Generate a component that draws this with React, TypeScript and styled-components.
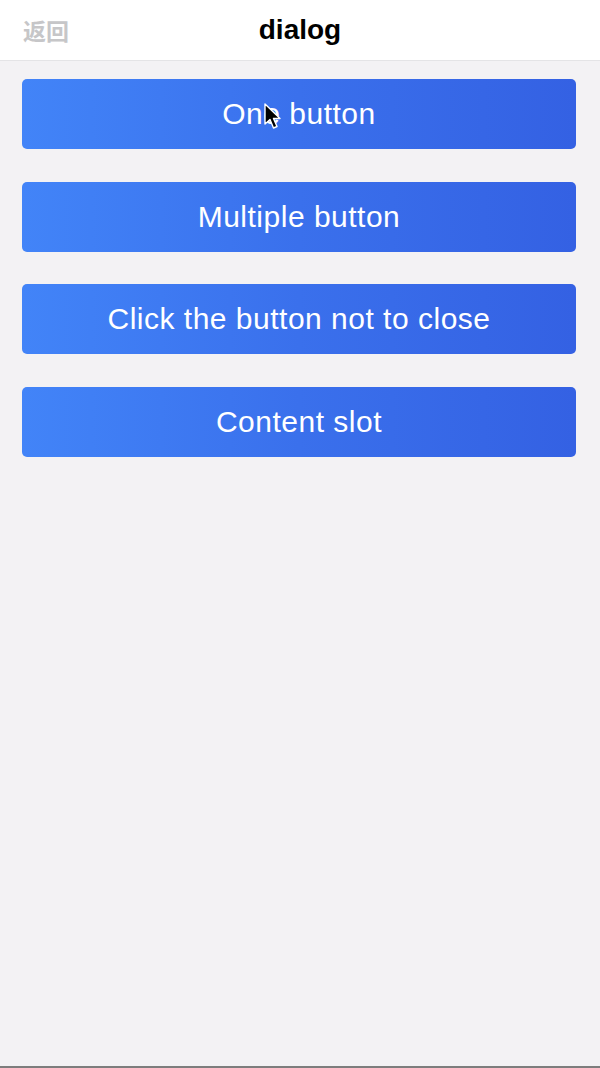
import React from 'react';
import styled, { createGlobalStyle } from 'styled-components';

const GlobalStyle = createGlobalStyle`
  html, body {
    margin: 0;
    padding: 0;
    background: #f3f2f4;
    font-family: "Liberation Sans", "Noto Sans CJK SC", Arial, sans-serif;
  }
`;

const Page = styled.div`
  position: relative;
  width: 600px;
  height: 1068px;
  background: #f3f2f4;
  display: flex;
  flex-direction: column;
  overflow: hidden;
`;

const Header = styled.header`
  height: 60px;
  background: #ffffff;
  border-bottom: 1px solid #e4e4e6;
  display: grid;
  grid-template-columns: 1fr auto 1fr;
  align-items: center;
  padding: 0 23px;
`;

const Back = styled.span`
  color: #c6c6c8;
  font-size: 23px;
  font-weight: bold;
  font-family: "Noto Sans CJK SC", sans-serif;
`;

const Title = styled.h1`
  margin: 0;
  font-size: 28px;
  font-weight: bold;
  color: #000;
`;

const List = styled.div`
  flex: 1;
  display: flex;
  flex-direction: column;
  gap: 32.6px;
  padding: 18px 24px 0 22px;
`;

const Button = styled.button`
  height: 70px;
  padding: 0;
  border: none;
  border-radius: 5px;
  background: linear-gradient(90deg, #4284f8 0%, #3a70ec 50%, #3461e3 100%);
  color: #ffffff;
  font-family: "Liberation Sans", Arial, sans-serif;
  font-size: 30px;
  letter-spacing: 0.5px;
  cursor: pointer;
`;

const BottomBar = styled.div`
  height: 2px;
  background: #7d7d7d;
`;

const Cursor = styled.svg`
  position: absolute;
  left: 264px;
  top: 103px;
`;

const labels = ['One button', 'Multiple button', 'Click the button not to close', 'Content slot'];

const App: React.FC = () => {
  return (
    <Page>
      <GlobalStyle />
      <Header>
        <Back>返回</Back>
        <Title>dialog</Title>
        <span />
      </Header>
      <List>
        {labels.map(label => (
          <Button key={label}>{label}</Button>
        ))}
      </List>
      <BottomBar />
      <Cursor width="18" height="28" viewBox="0 0 18 28">
        <path d="M1 1 L1 21 L6 16.5 L9.5 25 L13 23.5 L9.5 15.5 L16 15.5 Z" fill="#000" stroke="#fff" strokeWidth="1.4" strokeLinejoin="round" />
      </Cursor>
    </Page>
  );
};

export default App;
